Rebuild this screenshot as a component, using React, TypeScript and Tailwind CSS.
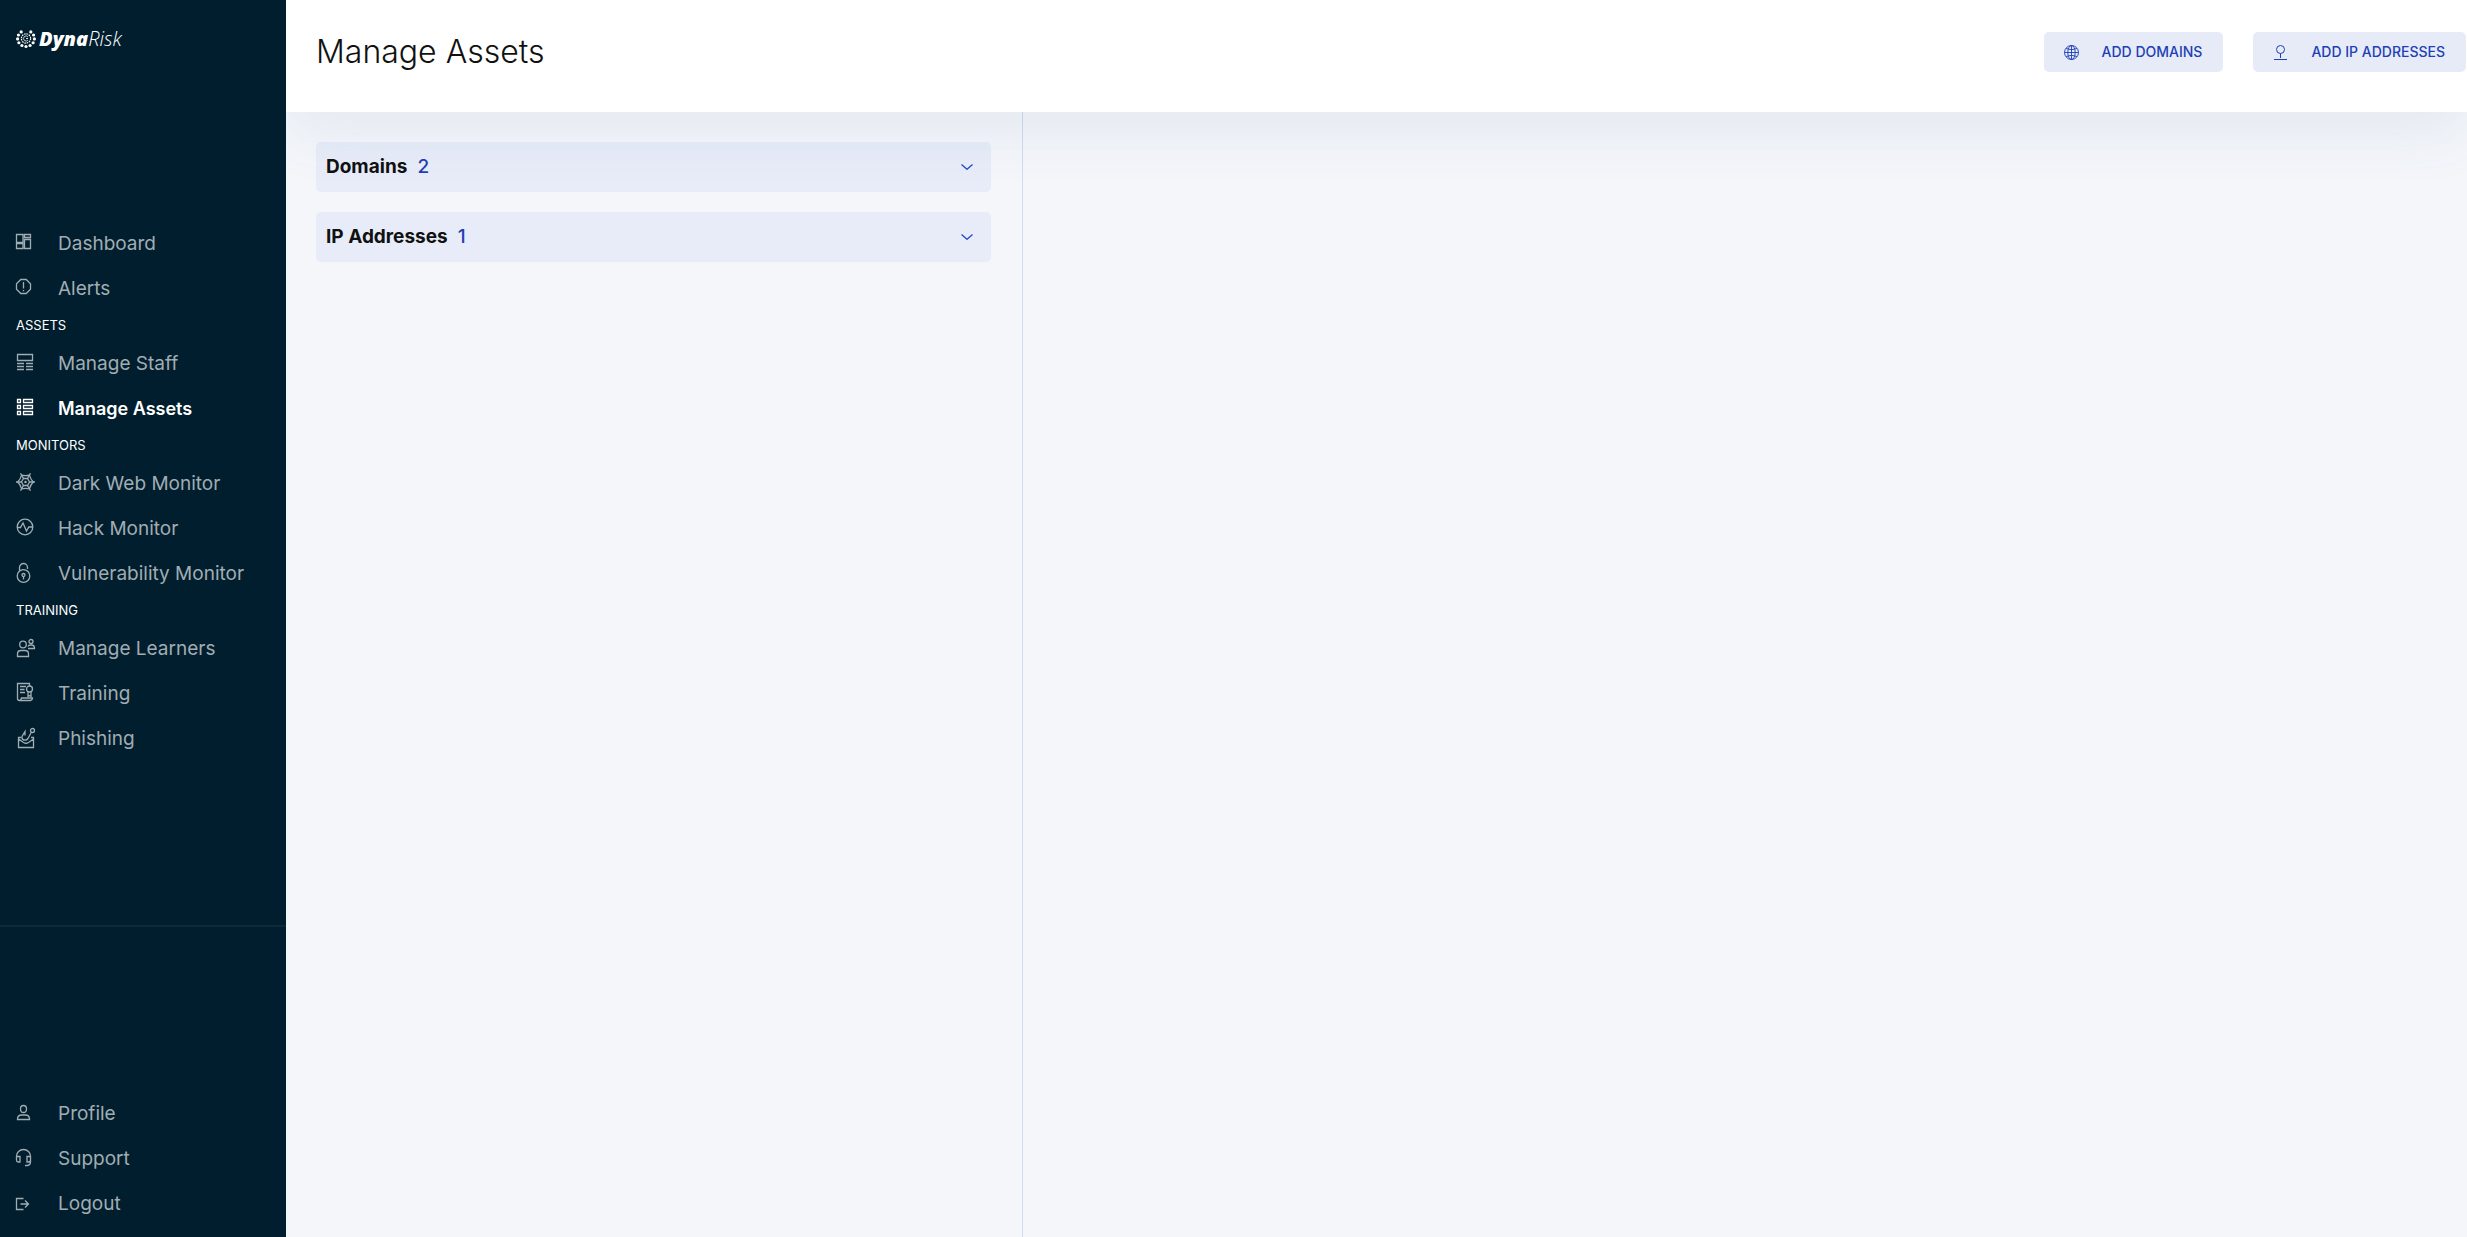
import { clsx } from "clsx";
import type { ReactNode } from "react";

type NavItem = {
  label: string;
  icon: ReactNode;
  active?: boolean;
};

type NavSection = {
  title?: string;
  items: NavItem[];
};

function Icon({ children }: { children: ReactNode }) {
  return (
    <svg
      viewBox="0 0 20 20"
      className="size-5 shrink-0 overflow-visible"
      fill="none"
      stroke="currentColor"
      strokeWidth="1.3"
      aria-hidden
    >
      {children}
    </svg>
  );
}

const dashboardIcon = (
  <Icon>
    <path d="M.5 2.5h6.5v8H.5zM.5 11.500h6.500v5H.5zM8.500 2.500h6v3h-6zM8.500 7.500h6v9h-6z" />
  </Icon>
);

const alertsIcon = (
  <Icon>
    <path d="M4.800 2.500h5.400l4.300 4.300v5.400l-4.300 4.300H4.800L.5 12.200V6.800zM7.500 5v6.500M7.500 13v1.200" />
  </Icon>
);

const staffIcon = (
  <Icon>
    <path d="M1.500 2.500h15v6h-15zM1 11.500h7M10 11.500h7M1 14.500h7M10 14.500h7M1 17.500h7M10 17.500h7" />
  </Icon>
);

const assetsIcon = (
  <Icon>
    <path d="M1.500 2.500h3v3h-3zM7.500 2.500h9v3h-9zM1.500 8.500h3v3h-3zM7.500 8.500h9v3h-9zM1.500 14.500h3v3h-3zM7.500 14.500h9v3h-9z" />
  </Icon>
);

const webIcon = (
  <Icon>
    <path d="M4.500 1.200 7.500 6.500M14.500 1.200 11.500 6.500M4.500 18.800 7.500 13.500M14.500 18.800 11.500 13.500M0 10h5.500M13.500 10H19" />
    <path d="M5.600 3.200Q9.500 4.200 13.400 3.200Q14.500 7.300 17.300 10Q14.500 12.700 13.400 16.800Q9.500 15.800 5.600 16.800Q4.500 12.700 1.700 10Q4.500 7.300 5.600 3.200z" />
    <path d="M7.500 6.500h4l2 3.500-2 3.500h-4l-2-3.500z" />
    <circle cx="9.500" cy="10" r=".6" />
  </Icon>
);

const hackIcon = (
  <Icon>
    <circle cx="9" cy="10" r="7.800" />
    <path d="M1.200 10.500h3.300l2.500-4.500 3.500 8 2.300-4h4" />
  </Icon>
);

const vulnerabilityIcon = (
  <Icon>
    <circle cx="7.500" cy="14" r="6.300" />
    <path d="M3.500 8.800V5.500a4 4 0 0 1 8 0v1.500M7.500 14.500v3" />
    <circle cx="7.500" cy="13" r="1.500" />
  </Icon>
);

const learnersIcon = (
  <Icon>
    <circle cx="7" cy="7.500" r="3.300" />
    <path d="M1.500 19.500v-2.500q0-3.500 3.500-3.500h4q3.500 0 3.500 3.500v2.500zM12 11.500h6.500q0-3.500-3-3.500h-1q-2 0-2.500 1.500" />
    <circle cx="15" cy="4.500" r="2" />
  </Icon>
);

const trainingIcon = (
  <Icon>
    <path d="M13.500 4V1.500h-12v15q0 2 2 2h11q2-.5 2-2.500H5.500q-.5 2.500-2 2.500M4 4.500h6M4 7.500h4.500M4 10.500h5" />
    <circle cx="13.500" cy="7" r="3" />
    <path d="M12 9.500v5l1.500-1 1.500 1v-5" />
  </Icon>
);

const phishingIcon = (
  <Icon>
    <path d="M5 10.500H2.500v10h15v-10H15M2.500 12l5 3.500q2.500 1.500 5 0l5-3.500" />
    <path d="M15.200 5.500 12 11.500q-1.500 2-4 1.500T6 9.500l3-5v4" />
    <circle cx="16.500" cy="3.500" r="2" />
  </Icon>
);

const profileIcon = (
  <Icon>
    <ellipse cx="7.500" cy="7" rx="3" ry="3.500" />
    <path d="M1.500 17.500v-1q.5-3.500 4-3.500h4q3.500 0 4 3.500v1z" />
  </Icon>
);

const supportIcon = (
  <Icon>
    <path d="M.5 13V9a7 6.500 0 0 1 14 0v6q0 3-3 3.500H9M.5 9.500h3.500v5.500H2.500q-2 0-2-2zM14.500 9.500H11v5.500h1.500q2 0 2-2" />
  </Icon>
);

const logoutIcon = (
  <Icon>
    <path d="M7.500 6.500h-7v11h7M4.500 12h8M9 8.500l3.500 3.500L9 15.500" />
  </Icon>
);

const mainSections: NavSection[] = [
  {
    items: [
      { label: "Dashboard", icon: dashboardIcon },
      { label: "Alerts", icon: alertsIcon },
    ],
  },
  {
    title: "ASSETS",
    items: [
      { label: "Manage Staff", icon: staffIcon },
      { label: "Manage Assets", icon: assetsIcon, active: true },
    ],
  },
  {
    title: "MONITORS",
    items: [
      { label: "Dark Web Monitor", icon: webIcon },
      { label: "Hack Monitor", icon: hackIcon },
      { label: "Vulnerability Monitor", icon: vulnerabilityIcon },
    ],
  },
  {
    title: "TRAINING",
    items: [
      { label: "Manage Learners", icon: learnersIcon },
      { label: "Training", icon: trainingIcon },
      { label: "Phishing", icon: phishingIcon },
    ],
  },
];

const accountItems: NavItem[] = [
  { label: "Profile", icon: profileIcon },
  { label: "Support", icon: supportIcon },
  { label: "Logout", icon: logoutIcon },
];

const assetGroups = [
  { label: "Domains", count: 2 },
  { label: "IP Addresses", count: 1 },
];

// Outer ring of the logo, open at the top
const LOGO_DOTS = Array.from({ length: 11 }, (_, i) => {
  const angle = ((-55 + i * 29) * Math.PI) / 180;
  return { x: 10 + 8.4 * Math.cos(angle), y: 9.5 + 8 * Math.sin(angle) };
});

function Logo() {
  return (
    <a href="#" className="flex items-center gap-[3px] px-4 text-white">
      <svg viewBox="0 0 20 20" className="size-5" fill="currentColor" aria-hidden>
        {LOGO_DOTS.map((dot, i) => (
          <circle key={i} cx={dot.x} cy={dot.y} r="1.6" />
        ))}
        <circle
          cx="10"
          cy="9.5"
          r="4.6"
          fill="none"
          stroke="currentColor"
          strokeWidth="1.2"
          strokeDasharray="1.5 .9"
        />
        <path
          d="M12 8a2.500 2.500 0 1 0 0 3M10 9.500h2"
          fill="none"
          stroke="currentColor"
          strokeWidth=".8"
        />
      </svg>
      <span className="font-['Open_Sans',sans-serif] text-xl leading-5 italic">
        <span className="font-extrabold">Dyna</span>
        <span className="font-light">Risk</span>
      </span>
    </a>
  );
}

function NavLink({ item }: { item: NavItem }) {
  return (
    <li>
      <a
        href="#"
        aria-current={item.active ? "page" : undefined}
        className={clsx(
          "flex h-[45px] items-start gap-[22px] px-4 pt-3 leading-6 whitespace-nowrap",
          item.active
            ? "text-[18px] font-semibold text-white"
            : "text-[19px] text-[#a1adb3]"
        )}
      >
        {item.icon}
        {item.label}
      </a>
    </li>
  );
}

function Sidebar() {
  return (
    <aside className="relative z-20 flex w-[286px] shrink-0 flex-col bg-[#001e2d]">
      <div className="h-[220px] shrink-0 pt-[29px]">
        <Logo />
      </div>
      <nav className="flex-1">
        {mainSections.map((section, i) => (
          <section key={i}>
            {section.title && (
              <h2 className="px-4 text-[13px] leading-[30px] text-white">
                {section.title}
              </h2>
            )}
            <ul>
              {section.items.map((item) => (
                <NavLink key={item.label} item={item} />
              ))}
            </ul>
          </section>
        ))}
      </nav>
      <ul className="flex h-78 shrink-0 flex-col justify-end border-t-2 border-[#0d2a38] pb-3">
        {accountItems.map((item) => (
          <NavLink key={item.label} item={item} />
        ))}
      </ul>
    </aside>
  );
}

function ActionButton({ icon, label }: { icon: ReactNode; label: string }) {
  return (
    <button
      type="button"
      className="flex h-10 items-center gap-[18px] rounded-[5px] bg-[#e7ebf8] pr-[21px] pl-5 text-sm font-medium text-[#1d40b5]"
    >
      {icon}
      {label}
    </button>
  );
}

function Header() {
  return (
    <header className="relative z-10 flex h-28 shrink-0 items-start justify-between bg-white pt-8 pr-px pl-[30px] shadow-[0_20px_60px_rgba(71,99,140,0.09)]">
      <h1 className="text-[32px] leading-10 font-light text-[#111]">
        Manage Assets
      </h1>
      <div className="flex gap-[30px]">
        <ActionButton
          label="ADD DOMAINS"
          icon={
            <Icon>
              <g strokeWidth=".9">
                <circle cx="7.5" cy="10.5" r="7" />
                <ellipse cx="7.5" cy="10.5" rx="3.7" ry="7" />
                <path d="M7.500 3.500v14M.5 10.500h14M2 6.500q5.500 2.500 11 0M2 14.500q5.500-2.500 11 0" />
              </g>
            </Icon>
          }
        />
        <ActionButton
          label="ADD IP ADDRESSES"
          icon={
            <Icon>
              <g strokeWidth="1">
                <circle cx="7.5" cy="7.5" r="4" />
                <path d="M7.500 11.500v4.500M1 17.500h13" />
              </g>
            </Icon>
          }
        />
      </div>
    </header>
  );
}

function AssetGroup({ label, count }: { label: string; count: number }) {
  return (
    <button
      type="button"
      aria-expanded={false}
      className="flex h-[50px] w-full items-center rounded-[5px] bg-[#e8ecf8] pr-[18px] pl-[10px] text-[19px] text-[#111]"
    >
      <span className="font-bold">{label}</span>
      <span className="ml-[10px] font-medium text-[#1d40b5]">{count}</span>
      <svg
        viewBox="0 0 12 6"
        className="ml-auto h-[6px] w-3"
        fill="none"
        stroke="#2348c8"
        strokeWidth="1.3"
        aria-hidden
      >
        <path d="M.5.500 6 5.300 11.500.500" />
      </svg>
    </button>
  );
}

export default function App() {
  return (
    <div className="flex min-h-screen bg-[#f4f6fa] font-[Inter,sans-serif]">
      <Sidebar />
      <div className="flex min-w-0 flex-1 flex-col">
        <Header />
        <main className="flex flex-1">
          <div className="flex w-[33.8%] flex-col gap-5 border-r border-[#d0daf2] pt-[30px] pr-[31px] pl-[30px]">
            {assetGroups.map((group) => (
              <AssetGroup key={group.label} {...group} />
            ))}
          </div>
          <div className="flex-1" />
        </main>
      </div>
    </div>
  );
}
